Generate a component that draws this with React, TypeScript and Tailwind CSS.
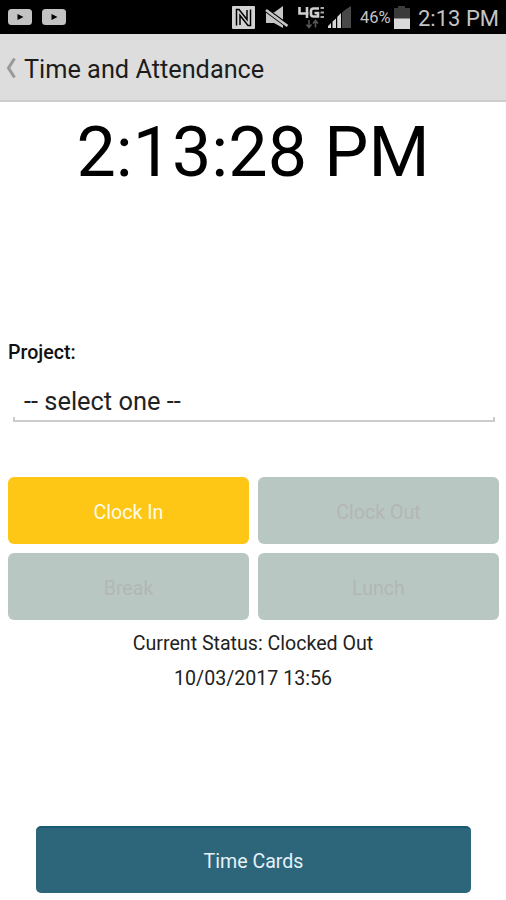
import { clsx } from "clsx";

interface ActionButtonProps {
  label: string;
  enabled?: boolean;
}

const ACTIONS: ActionButtonProps[] = [
  { label: "Clock In", enabled: true },
  { label: "Clock Out" },
  { label: "Break" },
  { label: "Lunch" },
];

function VideoIcon() {
  return (
    <svg width="24" height="16" viewBox="0 0 24 16">
      <rect width="24" height="16" rx="3.5" fill="#c3c3c3" />
      <path d="M9.5 5 15.5 8l-6 3z" fill="#000" />
    </svg>
  );
}

function NfcIcon() {
  return (
    <svg width="23" height="23" viewBox="0 0 23 23">
      <rect width="23" height="23" rx="1" fill="#d2d2d2" />
      <path d="M4.500 19.500V3.500H7L15 13.500V4" fill="none" stroke="#000" strokeWidth="1.500" />
      <path d="M8 19V9.500L16 19.500h2.500V3.500" fill="none" stroke="#000" strokeWidth="1.500" />
    </svg>
  );
}

function MuteIcon() {
  return (
    <svg width="24" height="23" viewBox="0 0 24 23">
      <path d="M1 6.500h8L18 0v22l-9-5H1z" fill="#c6c6c6" />
      <path d="M-1 2.500 25 21.500" stroke="#000" strokeWidth="4.600" />
      <path d="M1 4 22.500 20" stroke="#c6c6c6" strokeWidth="2.800" />
    </svg>
  );
}

function LteIcon() {
  return (
    <svg width="27" height="23" viewBox="0 0 27 23">
      <g fill="none" stroke="#d0d0d0" strokeWidth="2.600">
        <path d="M1.500 1v6.500h9M9 1v11" />
        <path d="M21 2.500h-5.500q-2.500 0-2.500 2.500v3q0 2.500 2.500 2.500H20V7h-3.500" />
      </g>
      <path d="M22.500 2h3.500M22.500 6.500h3.500M22.500 11h3.500" stroke="#a8a8a8" strokeWidth="1.800" />
      <path d="M11 14v7M8.500 18.500l2.500 3 2.500-3M17.500 21.500v-7M15 17.500l2.500-3 2.500 3" fill="none" stroke="#555" strokeWidth="1.600" />
    </svg>
  );
}

function SignalIcon() {
  return (
    <svg width="23" height="22" viewBox="0 0 23 22">
      <path d="M0 22v-2l3-3v5zM4.500 22v-6.500l3.500-3V22zM9.200 22V11l3.800-4v15z" fill="#d6d6d6" />
      <path d="M14 22V6.500L17.500 3.500v18.500zM17.500 22V3.500L23 0v22z" fill="#484848" />
    </svg>
  );
}

function BatteryIcon() {
  return (
    <svg width="16" height="23" viewBox="0 0 16 23">
      <path d="M0 2h4V0h7v2h5v11H0z" fill="#3b3b3b" />
      <path d="M0 12.500h16V23H0z" fill="#dadada" />
    </svg>
  );
}

function StatusBar() {
  return (
    <div className="flex h-[34px] items-center bg-black pl-2 text-[#c4c4c4]">
      <div className="flex flex-1 gap-[10px]">
        <VideoIcon />
        <VideoIcon />
      </div>
      <NfcIcon />
      <div className="ml-[10px]">
        <MuteIcon />
      </div>
      <div className="ml-[9px]">
        <LteIcon />
      </div>
      <div className="ml-[3px]">
        <SignalIcon />
      </div>
      <span className="mt-[3px] ml-[9px] w-[31px] text-[16.5px] whitespace-nowrap">46%</span>
      <div className="ml-[3px]">
        <BatteryIcon />
      </div>
      <span className="mt-[3px] ml-[8px] w-[88px] text-[22px] leading-[30px] whitespace-nowrap">2:13 PM</span>
    </div>
  );
}

function ActionButton({ label, enabled }: ActionButtonProps) {
  return (
    <button
      disabled={!enabled}
      className={clsx(
        "h-[67px] rounded-[6px] pt-1 text-[19.6px]",
        enabled ? "bg-[#fec615] text-[#fffbe9]" : "bg-[#b8c7c2] text-[#b3b6b5]"
      )}
    >
      {label}
    </button>
  );
}

export default function App() {
  return (
    <div className="flex h-[900px] w-[506px] flex-col overflow-hidden bg-white font-['Roboto','Liberation_Sans',sans-serif] text-black">
      <StatusBar />

      {/* Title bar */}
      <header className="flex h-[68px] items-center border-b-2 border-[#cdcdcd] bg-[#dddddd] pl-[6px]">
        <svg width="10" height="20" viewBox="0 0 10 20" className="mt-px">
          <path d="M8.500.5 2.500 10l6 9.500" fill="none" stroke="#9a9a9a" strokeWidth="3" />
        </svg>
        <h1 className="mt-[6px] ml-[8px] text-[25.3px] text-[#1c1c1c]">Time and Attendance</h1>
      </header>

      <main className="flex flex-1 flex-col px-2">
        <div className="mt-[10px] text-center text-[70px] leading-[80px]">2:13:28 PM</div>

        {/* Project picker */}
        <div className="mt-[149px]">
          <label className="block text-[19.6px] leading-6 font-medium text-[#111111]">Project:</label>
          <div className="mt-[21px] ml-[5px] w-[482px]">
            <div className="pl-[11px] text-[25.4px] leading-[30px] text-[#222222]">-- select one --</div>
            <div className="mt-px h-[5px] border-x-2 border-b-2 border-[#cccccc]" />
          </div>
        </div>

        <div className="mt-[55px] grid grid-cols-[241px_241px] gap-x-[9px] gap-y-[9px]">
          {ACTIONS.map((action) => (
            <ActionButton key={action.label} {...action} />
          ))}
        </div>

        <div className="mt-[6px] text-center text-[19.6px] leading-[35px] text-[#222222]">
          <p>Current Status: Clocked Out</p>
          <p>10/03/2017 13:56</p>
        </div>

        <button className="mt-auto mb-[7px] ml-[28px] h-[67px] w-[435px] rounded-[5px] border-t-2 border-[#185a70] bg-[#2d667b] pt-[2px] text-[19.6px] text-[#e4f2fa]">
          Time Cards
        </button>
      </main>
    </div>
  );
}
